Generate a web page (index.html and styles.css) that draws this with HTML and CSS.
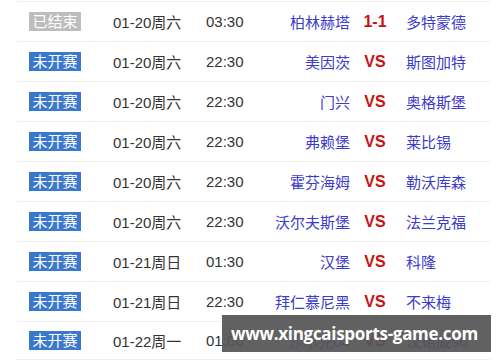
FILE: index.html
```html
<!DOCTYPE html>
<html lang="zh-CN">

<head>
    <meta charset="UTF-8">
    <title>赛程</title>
    <link rel="stylesheet" href="styles.css">
</head>

<body>
    <div class="schedule">
        <div class="match-row">
            <span class="status-badge done">已结束</span>
            <span class="match-date">01-20周六</span>
            <span class="match-time">03:30</span>
            <span class="team home">柏林赫塔</span>
            <span class="score">1-1</span>
            <span class="team away">多特蒙德</span>
        </div>
        <div class="match-row">
            <span class="status-badge">未开赛</span>
            <span class="match-date">01-20周六</span>
            <span class="match-time">22:30</span>
            <span class="team home">美因茨</span>
            <span class="score">VS</span>
            <span class="team away">斯图加特</span>
        </div>
        <div class="match-row">
            <span class="status-badge">未开赛</span>
            <span class="match-date">01-20周六</span>
            <span class="match-time">22:30</span>
            <span class="team home">门兴</span>
            <span class="score">VS</span>
            <span class="team away">奥格斯堡</span>
        </div>
        <div class="match-row">
            <span class="status-badge">未开赛</span>
            <span class="match-date">01-20周六</span>
            <span class="match-time">22:30</span>
            <span class="team home">弗赖堡</span>
            <span class="score">VS</span>
            <span class="team away">莱比锡</span>
        </div>
        <div class="match-row">
            <span class="status-badge">未开赛</span>
            <span class="match-date">01-20周六</span>
            <span class="match-time">22:30</span>
            <span class="team home">霍芬海姆</span>
            <span class="score">VS</span>
            <span class="team away">勒沃库森</span>
        </div>
        <div class="match-row">
            <span class="status-badge">未开赛</span>
            <span class="match-date">01-20周六</span>
            <span class="match-time">22:30</span>
            <span class="team home">沃尔夫斯堡</span>
            <span class="score">VS</span>
            <span class="team away">法兰克福</span>
        </div>
        <div class="match-row">
            <span class="status-badge">未开赛</span>
            <span class="match-date">01-21周日</span>
            <span class="match-time">01:30</span>
            <span class="team home">汉堡</span>
            <span class="score">VS</span>
            <span class="team away">科隆</span>
        </div>
        <div class="match-row">
            <span class="status-badge">未开赛</span>
            <span class="match-date">01-21周日</span>
            <span class="match-time">22:30</span>
            <span class="team home">拜仁慕尼黑</span>
            <span class="score">VS</span>
            <span class="team away">不来梅</span>
        </div>
        <div class="match-row last">
            <span class="status-badge">未开赛</span>
            <span class="match-date">01-22周一</span>
            <span class="match-time">01:00</span>
            <span class="team home">沙尔克04</span>
            <span class="score">VS</span>
            <span class="team away">汉诺威96</span>
        </div>

        <div class="watermark">www.xingcaisports-game.com</div>
    </div>
</body>

</html>
```

FILE: styles.css
```css
body {
    margin: 0;
    background: #fff;
    font-family: 'Liberation Sans', 'Noto Sans CJK SC', sans-serif;
    font-size: 15px;
    color: #333;
    overflow: hidden;
}

.schedule {
    position: relative;
    width: 473px;
    margin-left: 17px;
    padding-top: 1px;
}

.match-row {
    display: grid;
    grid-template-columns: 84px 93px 60px 84px 50px 1fr;
    align-items: center;
    height: 39px;
    padding-left: 12px;
    border-top: 1px solid #efefef;
}

.match-row.last {
    height: 37px;
    border-bottom: 1px solid #efefef;
}

.status-badge {
    width: 52px;
    height: 19px;
    line-height: 19px;
    text-align: center;
    color: #fff;
    background-color: #3a78cc;
}

.status-badge.done {
    background-color: #bdbdbd;
}

.team {
    color: #3b3bcc;
}

.team.home {
    text-align: right;
}

.team.away {
    padding-left: 6px;
}

.score {
    text-align: center;
    color: #cc1111;
    font-weight: bold;
    font-size: 16px;
}

.watermark {
    position: absolute;
    left: 205px;
    top: 315px;
    width: 269px;
    height: 37px;
    line-height: 37px;
    padding-left: 9px;
    box-sizing: border-box;
    white-space: nowrap;
    overflow: hidden;
    background: rgba(85, 85, 85, 0.93);
    color: #fff;
    font-family: 'Open Sans', sans-serif;
    font-weight: 700;
    font-size: 17px;
    letter-spacing: -0.3px;
}
```
